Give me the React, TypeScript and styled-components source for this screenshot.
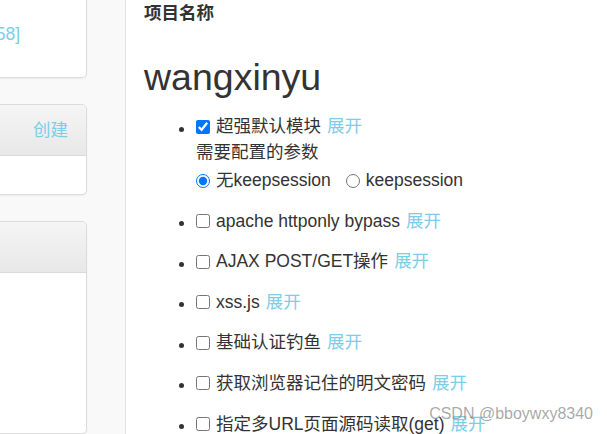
import * as React from 'react'
import styled, { createGlobalStyle } from 'styled-components'

const GlobalStyle = createGlobalStyle`
    html, body, #root {
        margin: 0;
        padding: 0;
        height: 100%;
        overflow: hidden;
    }
    body {
        background: #f9f9f9;
        color: #333;
        font-family: "Liberation Sans", Arial, "Noto Sans CJK SC", sans-serif;
        font-size: 17.5px;
        line-height: 25px;
    }
`

const LINK = '#7ccde6'

// ---------------------------------------- [Layout] ----------------------------------------
const Page = styled.div`
    display: flex;
    flex-direction: row;
    height: 100%;
`

const Sidebar = styled.aside`
    width: 88px;
    flex-shrink: 0;
    overflow: hidden;
    display: flex;
    flex-direction: column;
    gap: 26px;
    margin-top: -41px;
`

const Gutter = styled.div`
    width: 37px;
    flex-shrink: 0;
`

const Main = styled.main`
    position: relative;
    flex: 1;
    background: #fff;
    border-left: 1px solid #e2e2e2;
    padding: 1px 0 0 18px;
    overflow: hidden;
`

// ---------------------------------------- [Side panels] ----------------------------------------
interface PanelProps {
    grow?: boolean
}

const Panel = styled.div<PanelProps>`
    box-sizing: border-box;
    width: 300px;
    margin-left: -213px;
    background: #fff;
    border: 1px solid #dcdcdc;
    border-radius: 5px;
    box-shadow: 0 1px 2px rgba(0, 0, 0, 0.06);
    flex: ${(p) => (p.grow ? '1' : 'none')};
    display: flex;
    flex-direction: column;
    overflow: hidden;
`

const PanelHeading = styled.div`
    box-sizing: border-box;
    height: 51px;
    background: linear-gradient(to bottom, #f5f5f5, #e8e8e8);
    border-bottom: 1px solid #dadada;
    display: flex;
    justify-content: flex-end;
    align-items: center;
    padding-right: 18px;
    color: ${LINK};
`

const PanelBody = styled.div`
    height: 38px;
`

const DateLine = styled.div`
    height: 117px;
    display: flex;
    justify-content: flex-end;
    align-items: center;
    padding: 32px 66px 0 0;
    box-sizing: border-box;
    white-space: nowrap;
    color: ${LINK};
`

// ---------------------------------------- [Main content] ----------------------------------------
const Label = styled.div`
    font-weight: bold;
    height: 25px;
`

const Title = styled.h1`
    font-size: 37.5px;
    line-height: 41px;
    font-weight: 500;
    margin: 31px 0 16px 0;
`

const ModuleList = styled.ul`
    margin: 0;
    padding-left: 52px;
    list-style: disc;
`

const Item = styled.li`
    margin-bottom: 15.6px;
`

const Row = styled.label`
    display: flex;
    align-items: center;
    height: 25px;
    white-space: nowrap;
`

const Check = styled.input`
    width: 14px;
    height: 14px;
    margin: 0 6px 0 0;
    flex-shrink: 0;
`

const Expand = styled.a`
    color: ${LINK};
    margin-left: 6px;
    cursor: pointer;
`

const Params = styled.div`
    height: 25px;
    margin-top: 1px;
`

const RadioRow = styled.div`
    display: flex;
    align-items: center;
    height: 25px;
    margin-top: 3px;
    gap: 15px;
`

const RadioLabel = styled.label`
    display: flex;
    align-items: center;
    white-space: nowrap;
`

const Watermark = styled.div`
    position: absolute;
    right: 14px;
    bottom: 8px;
    font-size: 16px;
    color: rgba(140, 140, 140, 0.75);
    pointer-events: none;
`

const modules = [
    'apache httponly bypass',
    'AJAX POST/GET操作',
    'xss.js',
    '基础认证钓鱼',
    '获取浏览器记住的明文密码',
    '指定多URL页面源码读取(get)',
]

export default function App() {
    return (
        <>
            <GlobalStyle />
            <Page>
                <Sidebar>
                    <Panel>
                        <DateLine>创建时间[2021-06-18 12:34:58]</DateLine>
                    </Panel>
                    <Panel>
                        <PanelHeading>创建</PanelHeading>
                        <PanelBody />
                    </Panel>
                    <Panel grow>
                        <PanelHeading />
                    </Panel>
                </Sidebar>
                <Gutter />
                <Main>
                    <Label>项目名称</Label>
                    <Title>wangxinyu</Title>
                    <ModuleList>
                        <Item>
                            <Row>
                                <Check type="checkbox" defaultChecked />
                                超强默认模块<Expand>展开</Expand>
                            </Row>
                            <Params>需要配置的参数</Params>
                            <RadioRow>
                                <RadioLabel>
                                    <Check type="radio" name="ks" defaultChecked />
                                    无keepsession
                                </RadioLabel>
                                <RadioLabel>
                                    <Check type="radio" name="ks" />
                                    keepsession
                                </RadioLabel>
                            </RadioRow>
                        </Item>
                        {modules.map((m) => (
                            <Item key={m}>
                                <Row>
                                    <Check type="checkbox" />
                                    {m}
                                    <Expand>展开</Expand>
                                </Row>
                            </Item>
                        ))}
                    </ModuleList>
                    <Watermark>CSDN @bboywxy8340</Watermark>
                </Main>
            </Page>
        </>
    )
}
